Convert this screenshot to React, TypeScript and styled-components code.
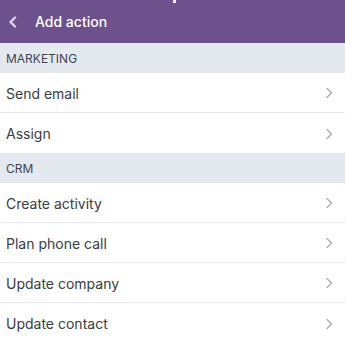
import React from "react";
import styled, { createGlobalStyle } from "styled-components";

const GlobalStyle = createGlobalStyle`
  html, body {
    margin: 0;
    padding: 0;
    background: #ffffff;
    font-family: Inter, "Noto Sans", Arial, sans-serif;
  }
`;

const Screen = styled.div`
  width: 345px;
  height: 338px;
  overflow: hidden;
  background: #fff;
  display: flex;
  flex-direction: column;
`;

const TopBar = styled.header`
  position: relative;
  height: 43px;
  flex-shrink: 0;
  background: #6c518d;
  display: flex;
  align-items: center;
  padding-left: 8px;
`;

const Peek = styled.span`
  position: absolute;
  left: 173px;
  top: 0;
  width: 3px;
  height: 3px;
  background: #f4f0f8;
`;

const BackButton = styled.button`
  border: 0;
  background: none;
  padding: 0;
  width: 27px;
  height: 43px;
  display: flex;
  align-items: center;
  cursor: pointer;
`;

const Title = styled.h1`
  margin: 0;
  font-size: 14px;
  font-weight: 500;
  color: #ffffff;
`;

const SectionHeader = styled.div`
  height: 30px;
  flex-shrink: 0;
  background: #e4e8ef;
  display: flex;
  align-items: center;
  padding-left: 6px;
  font-size: 12px;
  color: #3f4550;
  text-transform: uppercase;
`;

const Row = styled.div<{ $last?: boolean }>`
  height: 40px;
  flex-shrink: 0;
  box-sizing: border-box;
  display: flex;
  align-items: center;
  justify-content: space-between;
  padding: 1px 12px 0 6px;
  font-size: 14px;
  color: #383c44;
  border-bottom: ${(p) => (p.$last ? "none" : "1px solid #e3e6eb")};
  cursor: pointer;
`;

const Chevron = () => (
  <svg width="8" height="12" viewBox="0 0 8 12" fill="none">
    <path d="M2 1.5 L6.5 6 L2 10.5" stroke="#a2aab7" strokeWidth="1.3" strokeLinecap="round" strokeLinejoin="round" />
  </svg>
);

const BackIcon = () => (
  <svg width="10" height="12" viewBox="0 0 10 12" fill="none">
    <path d="M7 1.5 L2.5 6 L7 10.5" stroke="#ddd3e8" strokeWidth="2.4" strokeLinecap="round" strokeLinejoin="round" />
  </svg>
);

const sections = [
  { title: "Marketing", items: ["Send email", "Assign"] },
  { title: "CRM", items: ["Create activity", "Plan phone call", "Update company", "Update contact"] },
];

export default function App() {
  return (
    <>
      <GlobalStyle />
      <Screen>
        <TopBar>
          <Peek />
          <BackButton aria-label="Back">
            <BackIcon />
          </BackButton>
          <Title>Add action</Title>
        </TopBar>
        {sections.map((s) => (
          <React.Fragment key={s.title}>
            <SectionHeader>{s.title}</SectionHeader>
            {s.items.map((item, i) => (
              <Row key={item} $last={i === s.items.length - 1}>
                {item}
                <Chevron />
              </Row>
            ))}
          </React.Fragment>
        ))}
      </Screen>
    </>
  );
}
